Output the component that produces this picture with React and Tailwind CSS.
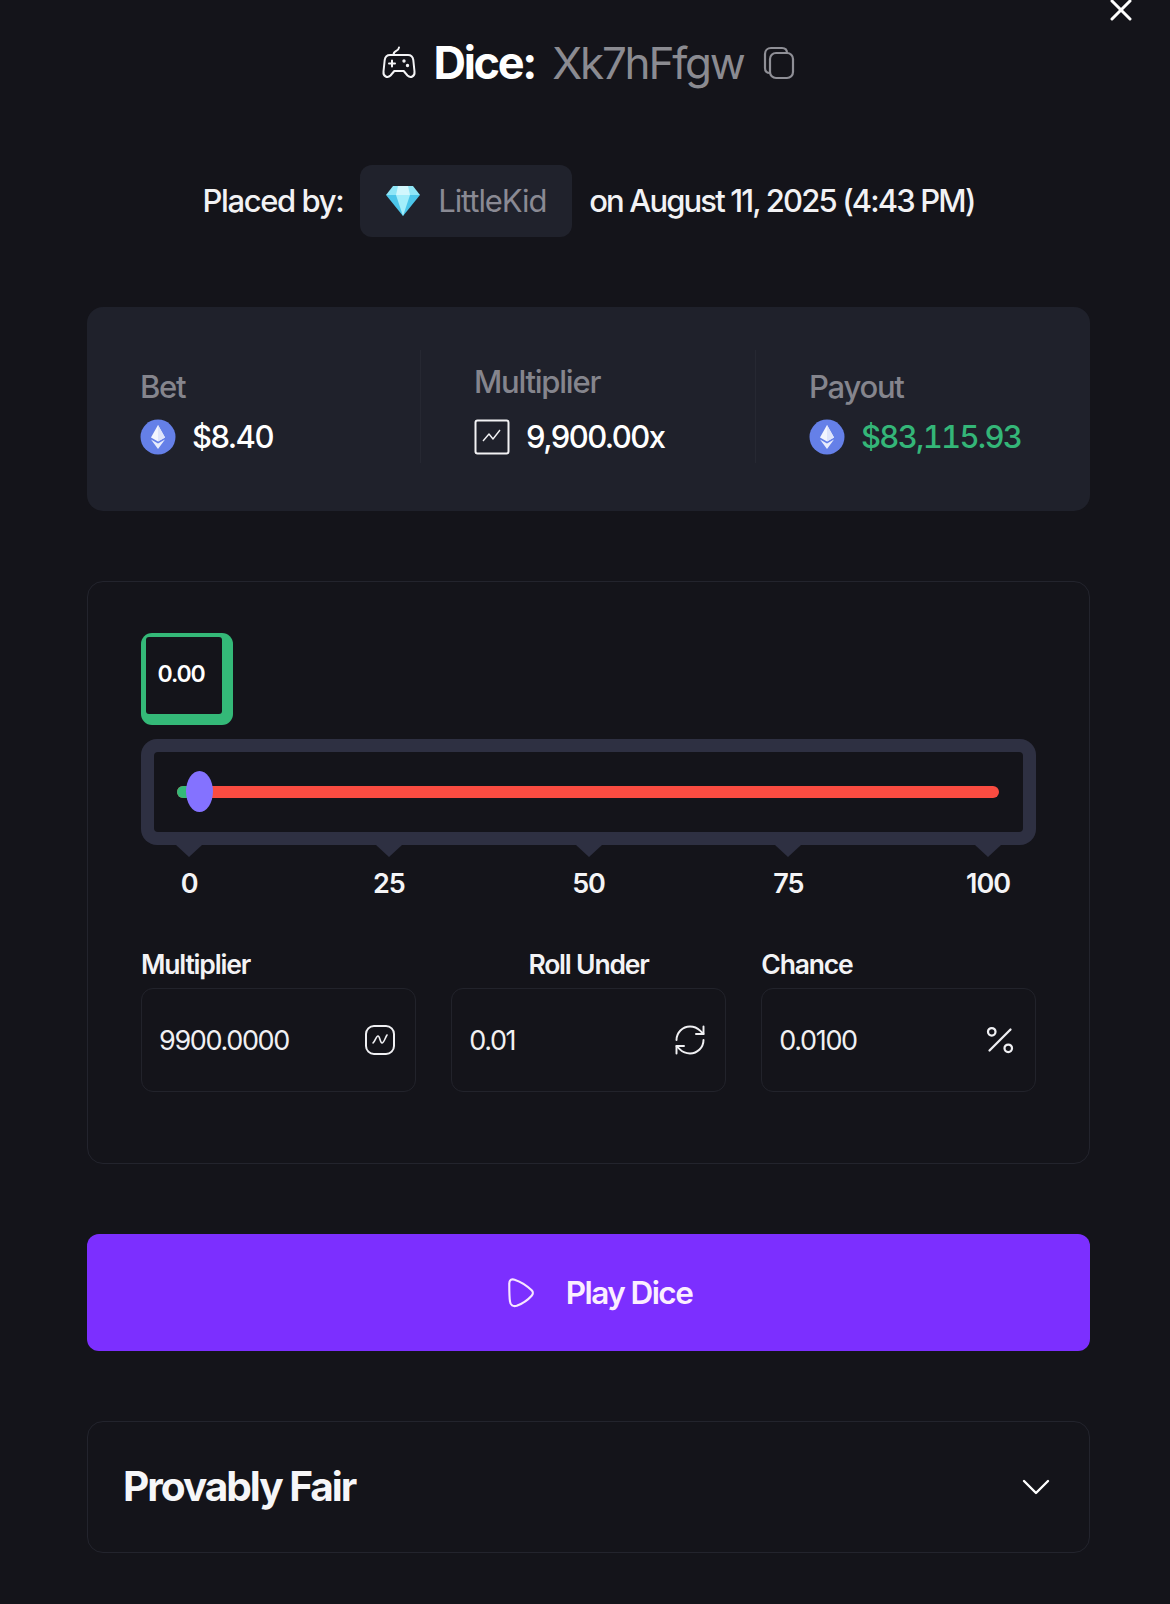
import React from "react";
import { X, Percent, RefreshCw, ChevronDown } from "lucide-react";

const Eth = () => (
  <svg width="36" height="36" viewBox="0 0 36 36" className="shrink-0">
    <circle cx="18" cy="18" r="17.5" fill="#6580e8" />
    <path d="M18 6 L25 18.5 L18 22.5 L11 18.5 Z" fill="#fff" fillOpacity="0.92" />
    <path d="M18 6 L18 22.5 L25 18.5 Z" fill="#dfe5fb" />
    <path d="M11 20.5 L18 24.5 L25 20.5 L18 30 Z" fill="#fff" fillOpacity="0.85" />
  </svg>
);

const Gamepad = () => (
  <svg width="36" height="36" viewBox="0 0 36 36" fill="none" stroke="#f4f4f6" strokeWidth="2" strokeLinecap="round" strokeLinejoin="round" className="shrink-0">
    <path d="M12.500 10c0-5 5-3 5.500-7.500" />
    <path d="M9 10h18c3 0 4.800 2 5.300 5l1.200 11.500c.5 5-4 7-7 4l-3.800-4.500h-9.400l-3.800 4.500c-3 3-7.500 1-7-4L3.700 15C4.200 12 6 10 9 10z" />
    <path d="M11 15.500v6M8 18.500h6" />
    <circle cx="23" cy="16" r="0.700" fill="#f4f4f6" />
    <circle cx="26.500" cy="20.500" r="0.700" fill="#f4f4f6" />
  </svg>
);

const CopyIcon = () => (
  <svg width="34" height="34" viewBox="0 0 34 34" fill="none" stroke="#8f8f96" strokeWidth="2.200" className="shrink-0">
    <rect x="8" y="7" width="23" height="25" rx="6" />
    <path d="M8 27c-3 0-5-2-5-5V8c0-3.500 2.500-6 6-6h11c3 0 5 2 5 5" />
  </svg>
);

const Gem = () => (
  <svg width="36" height="32" viewBox="0 0 36 32" className="shrink-0">
    <path d="M8 1h20l7 9H1z" fill="#8fe6f7" />
    <path d="M1 10h34L18 31z" fill="#4cc6ea" />
    <path d="M11 10h14L18 31z" fill="#a4eefb" />
    <path d="M13 1h10l2 9H11z" fill="#d2f7fd" />
  </svg>
);

const Ticks = [0, 25, 50, 75, 100];

const Field = ({ label, labelClass = "", value, icon }) => (
  <div className="flex flex-col">
    <div className={`h-[27px] text-[26.500px] leading-[27px] font-semibold tracking-[-0.045em] text-[#f3f3f5] ${labelClass}`}>{label}</div>
    <div className="mt-[10px] h-[104px] rounded-[12px] border border-[#22232b] flex items-center justify-between pl-[17px] pr-[17px]">
      <span className="pt-[3px] text-[27px] tracking-[-0.05em] text-[#f0f0f3]">{value}</span>
      {icon}
    </div>
  </div>
);

export default function App() {
  return (
    <div className="relative w-[1170px] h-[1604px] overflow-hidden bg-[#14141a] text-white" style={{ fontFamily: '"Inter", "Liberation Sans", sans-serif' }}>
      <X size={36} strokeWidth={2} className="absolute right-[31px] top-[-8px] text-white" />

      <div className="pl-[87px] pr-[80px]">
        <div className="h-[126px] flex items-center justify-center pb-[1px]">
          <Gamepad />
          <span className="ml-[16px] text-[45px] font-bold tracking-[-0.05em]">Dice:</span>
          <span className="ml-[17px] text-[44px] tracking-[-0.05em] text-[#8b8b91]">Xk7hFfgw</span>
          <span className="ml-[18px]"><CopyIcon /></span>
        </div>

        <div className="mt-[39px] h-[72px] flex items-center justify-center text-[31px] font-medium tracking-[-0.055em] text-[#f2f2f4]">
          <span className="tracking-[-0.045em]">Placed by:</span>
          <div className="ml-[17px] h-[72px] w-[212px] rounded-[12px] bg-[#20222c] flex items-center pl-[25px]">
            <Gem />
            <span className="ml-[17px] text-[#8a8a94] font-normal tracking-[-0.035em]">LittleKid</span>
          </div>
          <span className="ml-[17px] tracking-[-0.06em]">on August 11, 2025 (4:43 PM)</span>
        </div>

        <div className="mt-[70px] h-[204px] rounded-[16px] bg-[#1f212b] grid grid-cols-[281px_335px_1fr] pl-[53px] pt-[43px] items-start">
          <div className="border-r border-[#262832] h-[113px] flex flex-col justify-end">
            <div className="text-[31px] leading-[34px] font-medium tracking-[-0.04em] text-[#85858d]">Bet</div>
            <div className="mt-[15px] flex items-center h-[36px] gap-[16px]">
              <Eth />
              <span className="text-[31px] font-medium tracking-[-0.05em]">$8.40</span>
            </div>
            <div className="h-[8px]" />
          </div>
          <div className="border-r border-[#262832] h-[113px] flex flex-col justify-end pl-[53px]">
            <div className="text-[31px] leading-[34px] font-medium tracking-[-0.04em] text-[#85858d]">Multiplier</div>
            <div className="mt-[20px] flex items-center h-[36px] gap-[16px]">
              <svg width="36" height="36" viewBox="0 0 36 36" fill="none" stroke="#f2f2f4" strokeWidth="2" className="shrink-0">
                <rect x="1.500" y="1.500" width="33" height="33" rx="2" />
                <path d="M9 22l6-7 4 5 7-9" strokeWidth="1.400" strokeLinejoin="round" />
              </svg>
              <span className="text-[31px] font-medium tracking-[-0.05em]">9,900.00x</span>
            </div>
            <div className="h-[8px]" />
          </div>
          <div className="h-[113px] flex flex-col justify-end pl-[53px]">
            <div className="text-[31px] leading-[34px] font-medium tracking-[-0.04em] text-[#85858d]">Payout</div>
            <div className="mt-[15px] flex items-center h-[36px] gap-[16px]">
              <Eth />
              <span className="text-[31px] font-medium tracking-[-0.055em] tabular-nums text-[#34b678]">$83,115.93</span>
            </div>
            <div className="h-[8px]" />
          </div>
        </div>

        <div className="mt-[70px] h-[583px] rounded-[16px] border border-[#23242d] px-[53px] pt-[51px]">
          <div className="w-[92px] h-[92px] rounded-[11px] bg-[#34b978] pl-[5px] pt-[4px]">
            <div className="w-[76px] h-[77px] rounded-[3px] bg-[#14141a] flex items-center justify-center pb-[2px] pr-[6px] text-[23px] font-semibold tracking-[-0.05em]">0.00</div>
          </div>

          <div className="mt-[14px] h-[106px] rounded-[16px] bg-[#2e3042] p-[13px]">
            <div className="h-full rounded-[4px] bg-[#14141a] flex items-center pl-[23px] pr-[24px]">
              <div className="relative w-full h-[12px] rounded-full bg-[#fa4c41]">
                <div className="absolute left-0 top-0 h-[12px] w-[22px] rounded-l-full bg-[#34b978]" />
                <div className="absolute left-[9px] top-[-15px] w-[27px] h-[41px] rounded-[50%] bg-[#8472ff]" />
              </div>
            </div>
          </div>

          <div className="flex justify-between pl-[16px] pr-[16px]">
            {Ticks.map((t) => (
              <div key={t} className="w-[64px] flex flex-col items-center">
                <div className="w-0 h-0 border-l-[13px] border-r-[13px] border-t-[12px] border-l-transparent border-r-transparent border-t-[#2e3042]" />
                <div className="mt-[11px] text-[27px] leading-[32px] font-semibold tracking-[-0.04em] text-[#f4f4f6]">{t}</div>
              </div>
            ))}
          </div>

          <div className="mt-[51px] grid grid-cols-3 gap-[35.500px]">
            <Field label="Multiplier" value="9900.0000" icon={
              <svg width="32" height="32" viewBox="0 0 32 32" fill="none" stroke="#f0f0f3" strokeWidth="2" className="shrink-0 mr-[2px]">
                <rect x="2" y="2" width="28" height="28" rx="8" />
                <path d="M9 19c2-1 3-7 5-7s2 7 4 7 3-5 5-8" strokeWidth="1.600" strokeLinecap="round" />
              </svg>
            } />
            <Field label="Roll Under" labelClass="text-center" value="0.01" icon={<RefreshCw size={36} strokeWidth={1.300} className="text-[#f0f0f3]" />} />
            <Field label="Chance" value="0.0100" icon={<Percent size={36} strokeWidth={1.500} className="text-[#f0f0f3]" />} />
          </div>
        </div>

        <div className="mt-[70px] h-[117px] rounded-[12px] bg-[#7c2fff] flex items-center justify-center pl-[20px]">
          <svg width="32" height="32" viewBox="0 0 30 30" fill="none" stroke="#f8e6ff" strokeWidth="2" strokeLinejoin="round" className="shrink-0">
            <path d="M4 6c0-3 2-4.500 5-3.500 6 2 12 6 16 10 1.500 1.500 1.500 3.500 0 5-4 4.500-9 7.500-14 9.500-3.500 1-6-.5-6.300-4C4 19 4 12 4 6z" />
          </svg>
          <span className="ml-[29px] text-[31.500px] font-semibold tracking-[-0.05em] text-[#fbeeff]">Play Dice</span>
        </div>

        <div className="mt-[70px] h-[132px] rounded-[16px] border border-[#23242d] flex items-center justify-between pl-[35px] pr-[29px]">
          <span className="text-[40.600px] font-bold tracking-[-0.05em] text-[#f6f6f8]">Provably Fair</span>
          <ChevronDown size={48} strokeWidth={1.200} className="text-white" />
        </div>
      </div>
    </div>
  );
}
